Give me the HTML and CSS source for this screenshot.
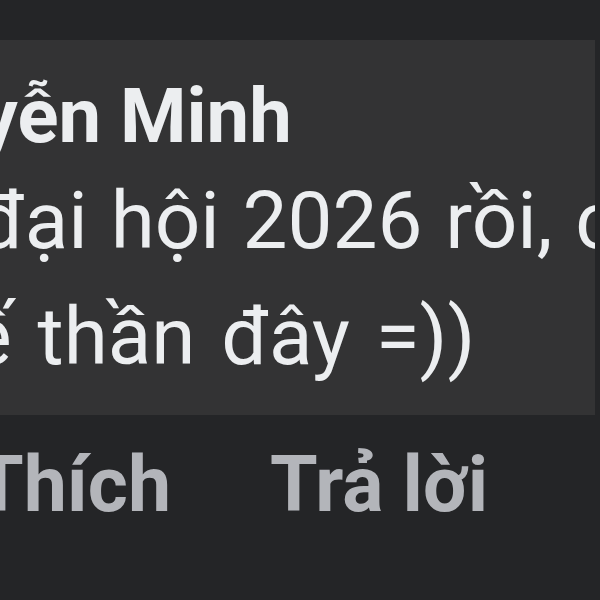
FILE: index.html
```html
<!DOCTYPE html>
<html lang="vi">
<head>
    <meta charset="UTF-8"/>
    <title>Bình luận</title>
    <link rel="stylesheet" href="styles.css">
</head>
<body>
<div class="comment">
    <div class="bubble">
        <div class="author">Nguyễn Minh</div>
        <div class="text line-1">đại hội 2026 rồi, chắc</div>
        <div class="text line-2">thế thần đây =))</div>
    </div>
    <div class="actions">
        <span class="like">Thích</span>
        <span class="reply">Trả lời</span>
    </div>
</div>
</body>
</html>
```

FILE: styles.css
```css
html {background:#242527;}
body {margin:0;overflow:hidden;font-family:Roboto, "Noto Sans", sans-serif;}
.comment {padding-top:40px;}
.bubble {background:#333334;width:595px;height:375px;overflow:hidden;padding-top:29px;box-sizing:border-box;color:#eceef0;white-space:nowrap;}
.author {font:bold 76px/94px Roboto, sans-serif;margin-left:-160px;}
.text {font:400 80px/116px Roboto, sans-serif;word-spacing:3px;}
.line-1 {margin-left:-23px;}
.line-2 {margin-left:-101px;word-spacing:6px;}
.actions {display:flex;gap:99px;margin-top:20px;font:bold 77px/100px Roboto, sans-serif;color:#b3b5ba;white-space:nowrap;margin-left:-24px;}
```
